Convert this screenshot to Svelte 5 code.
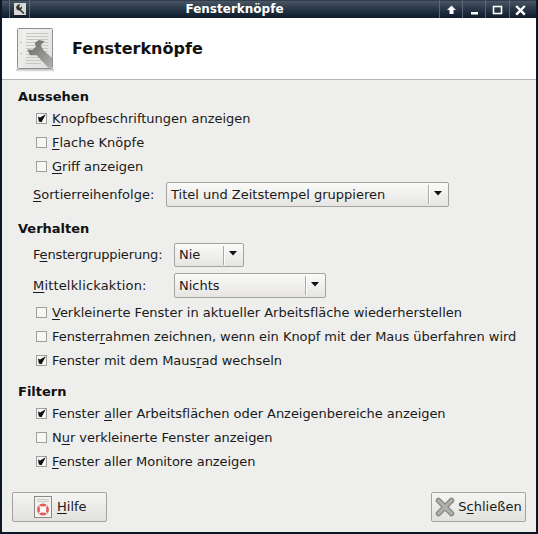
<script>
  const aussehen = [
    { on: true, pre: '', u: 'K', post: 'nopfbeschriftungen anzeigen' },
    { on: false, pre: '', u: 'F', post: 'lache Knöpfe' },
    { on: false, pre: '', u: 'G', post: 'riff anzeigen' }
  ];
  const verhalten = [
    { on: false, pre: '', u: 'V', post: 'erkleinerte Fenster in aktueller Arbeitsfläche wiederherstellen', sp: 'sp1' },
    { on: false, pre: 'Fenster', u: 'r', post: 'ahmen zeichnen, wenn ein Knopf mit der Maus überfahren wird', sp: 'sp2' },
    { on: true, pre: 'Fenster mit dem Maus', u: 'r', post: 'ad wechseln', sp: 'sp2' }
  ];
  const filtern = [
    { on: true, pre: 'Fenster ', u: 'a', post: 'ller Arbeitsflächen oder Anzeigenbereiche anzeigen', sp: 'sp2' },
    { on: false, pre: 'N', u: 'u', post: 'r verkleinerte Fenster anzeigen', sp: 'sp3' },
    { on: true, pre: '', u: 'F', post: 'enster aller Monitore anzeigen', sp: 'sp4' }
  ];
</script>

{#snippet check(c)}
  <div class="check">
    <span class="box">
      {#if c.on}
        <svg width="9" height="9" viewBox="0 0 9 9"><path d="M1 2.6 L3 3.5 L8.8 0.2 L4.5 8.2 L1.8 7.6 Z" fill="#111"/></svg>
      {/if}
    </span>
    <span class={c.sp}>{c.pre}<u>{c.u}</u>{c.post}</span>
  </div>
{/snippet}

{#snippet combo(text, cls)}
  <div class="combo {cls}">
    <span class="combo-text">{text}</span>
    <span class="sep"></span>
    <svg class="arrow" width="8" height="5" viewBox="0 0 8 5"><path d="M0 0H8L4 4.6Z" fill="#111"/></svg>
  </div>
{/snippet}

<div class="window">
  <div class="titlebar">
    <div class="tb-left">
      <svg width="12" height="12" viewBox="0 0 12 12">
        <rect x="0" y="0" width="12" height="12" fill="#d8d8d6"/>
        <path d="M2 4 L4 1.5 L6.5 1.5 L5 3.5 L6 5 L8 3.2 L8 5.5 L6.8 6.5 L10.5 10 L9.5 11 L5.5 7.5 L3 7 Z" fill="#333"/>
      </svg>
    </div>
    <div class="tb-title">Fensterknöpfe</div>
    <div class="tb-buttons">
      <span class="tb-btn w23">
        <svg width="11" height="18" viewBox="0 0 11 18"><path d="M5.5 5.5 L10 10 H7.5 V14 H3.5 V10 H1 Z" fill="#fff"/></svg>
      </span>
      <span class="tb-btn w23">
        <svg width="11" height="18" viewBox="0 0 11 18"><rect x="2" y="12" width="7" height="2.5" fill="#fff"/></svg>
      </span>
      <span class="tb-btn w24">
        <svg width="11" height="18" viewBox="0 0 11 18"><rect x="1.5" y="6.5" width="8" height="7" fill="none" stroke="#fff" stroke-width="1.6"/></svg>
      </span>
      <span class="tb-btn w22">
        <svg width="11" height="18" viewBox="0 0 11 18"><path d="M1.2 6 L9.8 14.6 M9.8 6 L1.2 14.6" stroke="#fff" stroke-width="2.4"/></svg>
      </span>
    </div>
  </div>

  <div class="header">
    <svg class="doc" width="40" height="46" viewBox="0 0 40 46">
      <defs>
        <linearGradient id="page" x1="0" y1="0" x2="1" y2="1">
          <stop offset="0" stop-color="#f4f4f2"/>
          <stop offset="1" stop-color="#dededc"/>
        </linearGradient>
        <linearGradient id="shadow" x1="0" y1="0" x2="0" y2="1">
          <stop offset="0" stop-color="#999" stop-opacity="0.7"/>
          <stop offset="1" stop-color="#999" stop-opacity="0"/>
        </linearGradient>
        <linearGradient id="wrench" x1="0.3" y1="0.3" x2="1" y2="1">
          <stop offset="0" stop-color="#7c7c7a"/>
          <stop offset="1" stop-color="#b0b0ae"/>
        </linearGradient>
      </defs>
      <rect x="1" y="42" width="38" height="3" fill="url(#shadow)"/>
      <rect x="2.5" y="1.5" width="35" height="40" rx="1" fill="url(#page)" stroke="#8f8f8d"/>
      <rect x="3" y="2" width="5" height="39" fill="#ebebe9"/>
      <path d="M5 15.5H7M5 26.5H7" stroke="#c0c0be"/>
      <path d="M11 6.5H33M11 9.5H33M11 12.5H33M11 15.5H33M11 18.5H33M11 21.5H33M11 24.5H33M11 27.5H33M11 30.5H33M11 33.5H33M11 36.5H26" stroke="#c6c6c4"/>
      <path d="M19.7 15.7 L24 13 L29.7 14.3 L25.7 18.3 L28.3 23 L37 31 L37 40.5 L33 40.5 L21.7 28.3 L15 28.3 L12.3 22.3 L17.3 23 L21 19.7 Z" fill="url(#wrench)"/>
    </svg>
    <h1>Fensterknöpfe</h1>
  </div>

  <div class="content">
    <section class="s1">
      <h2>Aussehen</h2>
      {#each aussehen as c}{@render check(c)}{/each}
      <div class="row r-sort">
        <span class="lbl"><u>S</u>ortierreihenfolge:</span>
        {@render combo('Titel und Zeitstempel gruppieren', 'w-sort')}
      </div>
    </section>

    <section class="s2">
      <h2>Verhalten</h2>
      <div class="row r-group">
        <span class="lbl"><span class="tight">F<u>e</u>nstergruppierung:</span></span>
        {@render combo('Nie', 'w-nie')}
      </div>
      <div class="row r-mid">
        <span class="lbl"><span class="wide"><u>M</u>ittelklickaktion:</span></span>
        {@render combo('Nichts', 'w-nichts')}
      </div>
      <div class="checks-v">
        {#each verhalten as c}{@render check(c)}{/each}
      </div>
    </section>

    <section>
      <h2>Filtern</h2>
      {#each filtern as c}{@render check(c)}{/each}
    </section>
  </div>

  <div class="footer">
    <div class="btn help">
      <svg width="19" height="22" viewBox="0 0 19 22">
        <rect x="0.5" y="0.5" width="17" height="21" fill="#f2f2f0" stroke="#8a8a88"/>
        <path d="M3 3.5H15M3 5.5H15" stroke="#c8c8c6"/>
        <circle cx="9" cy="13.5" r="4.6" fill="#fafafa" stroke="#dd5a52" stroke-width="2.6"/>
        <path d="M5.2 9.7 L7.4 11.9 M12.8 9.7 L10.6 11.9 M5.2 17.3 L7.4 15.1 M12.8 17.3 L10.6 15.1" stroke="#f4eeee" stroke-width="1.6"/>
      </svg>
      <span class="btn-text"><u>H</u>ilfe</span>
    </div>
    <div class="btn close">
      <svg width="20" height="20" viewBox="0 0 20 20">
        <path d="M3.5 3.5 L16.5 16.5 M16.5 3.5 L3.5 16.5" stroke="#868684" stroke-width="5.5" stroke-linecap="round"/>
        <path d="M3.5 3.5 L16.5 16.5 M16.5 3.5 L3.5 16.5" stroke="#b0b0ae" stroke-width="3" stroke-linecap="round"/>
      </svg>
      <span class="btn-text">S<u>c</u>hließen</span>
    </div>
  </div>
</div>

<style>
  :global(body) {
    margin: 0;
    background: #0f1a2a;
  }
  .window {
    width: 538px;
    height: 534px;
    box-sizing: border-box;
    display: flex;
    flex-direction: column;
    background: #eeeeec;
    border: solid #0c1826;
    border-width: 0 2px 2px 2px;
    font-family: "DejaVu Sans", sans-serif;
    font-size: 13px;
    color: #1a1a1a;
    overflow: hidden;
  }
  .titlebar {
    height: 18px;
    margin: 0 -2px;
    display: flex;
    align-items: center;
    background: linear-gradient(#1a2636 0, #4a5665 6%, #2c394a 45%, #0e1b2b);
    flex: none;
  }
  .tb-left {
    width: 21px;
    height: 18px;
    margin-left: 9px;
    box-sizing: border-box;
    display: flex;
    justify-content: center;
    align-items: center;
    border: solid #5b6675;
    border-width: 0 1px;
  }
  .tb-title {
    flex: 1;
    text-align: center;
    color: #fff;
    font-weight: bold;
    font-size: 12px;
  }
  .tb-buttons {
    display: flex;
    height: 18px;
    padding-right: 7px;
  }
  .tb-btn {
    height: 18px;
    display: flex;
    align-items: center;
    justify-content: center;
    border-left: 1px solid #5b6675;
    box-sizing: border-box;
  }
  .w22 { width: 22px; }
  .w23 { width: 23px; }
  .w24 { width: 24px; }
  .header {
    height: 61px;
    flex: none;
    background: #fff;
    border-bottom: 1px solid #b4b4b2;
    display: flex;
    align-items: center;
    padding-left: 13px;
    gap: 17px;
  }
  .doc { flex: none; margin-top: 2px; }
  h1 {
    margin: 0;
    font-size: 16px;
    font-weight: bold;
    color: #111;
  }
  .content {
    flex: 1;
    padding: 8px 0 0 16px;
    display: flex;
    flex-direction: column;
  }
  .s1 { margin-bottom: 13px; }
  .s2 { margin-bottom: 11px; }
  h2 {
    margin: 0;
    font-size: 13px;
    font-weight: bold;
    line-height: 17px;
    color: #111;
  }
  .check {
    height: 24px;
    display: flex;
    align-items: center;
    padding-left: 18px;
    gap: 5px;
    white-space: nowrap;
  }
  h2 + .check { margin-top: 1px; }
  .checks-v { margin-top: 2px; }
  .sp1 { letter-spacing: -0.013px; }
  .sp2 { letter-spacing: -0.045px; }
  .sp3 { letter-spacing: -0.03px; }
  .sp4 { letter-spacing: -0.066px; }
  .box {
    width: 11px;
    height: 11px;
    margin-top: 1px;
    box-sizing: border-box;
    border: 1px solid #9f9f9d;
    background: #f6f6f5;
    display: flex;
    align-items: center;
    justify-content: center;
    flex: none;
  }
  u { text-decoration: underline; text-underline-offset: 2px; }
  .row {
    height: 25px;
    display: flex;
    align-items: center;
    padding-left: 15px;
  }
  .lbl { flex: none; white-space: nowrap; }
  .r-sort { margin-top: 4px; }
  .r-sort .lbl { width: 133px; }
  .r-group { margin-top: 6px; height: 24px; }
  .r-group .combo { height: 24px; }
  .r-group .lbl, .r-group :global(.combo-text) { margin-bottom: 2px; }
  .r-mid { margin-top: 6px; }
  .r-group .lbl, .r-mid .lbl { width: 141px; }
  .tight { letter-spacing: -0.16px; }
  .wide { letter-spacing: 0.17px; }
  .combo {
    height: 25px;
    box-sizing: border-box;
    border: 1px solid #a3a39f;
    border-radius: 2px;
    background: linear-gradient(#fafaf9, #e6e5e2);
    display: flex;
    align-items: center;
    padding-left: 4px;
    flex: none;
  }
  .w-sort { width: 283px; }
  .w-nie { width: 70px; }
  .w-nichts { width: 152px; }
  .combo-text { flex: 1; }
  .sep {
    width: 2px;
    height: 19px;
    background: linear-gradient(90deg, #a9a9a6 50%, #fff 50%);
    margin-right: 4px;
  }
  .arrow { margin: 0 6px 3px 0; }
  .footer {
    flex: none;
    height: 30px;
    margin-bottom: 10px;
    padding: 0 10px;
    display: flex;
    justify-content: space-between;
  }
  .btn {
    height: 30px;
    width: 95px;
    box-sizing: border-box;
    border: 1px solid #a3a39f;
    border-radius: 2px;
    background: linear-gradient(#f5f5f3, #e2e1de);
    display: flex;
    align-items: center;
    justify-content: center;
  }
  .btn-text { margin-bottom: 2px; }
  .help { gap: 4px; justify-content: flex-start; padding-left: 21px; }
  .close { gap: 3px; }
</style>
